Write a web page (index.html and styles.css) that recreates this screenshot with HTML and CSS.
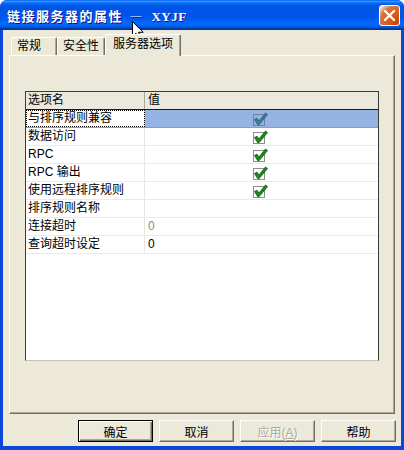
FILE: index.html
```html
<!DOCTYPE html>
<html lang="zh-CN">
<head>
    <meta charset="UTF-8">
    <title>链接服务器的属性 — XYJF</title>
    <link rel="stylesheet" href="styles.css">
</head>
<body>
    <div class="window">
        <div class="titlebar">
            <span class="title">链接服务器的属性 <span class="dash">—</span> <span class="code">XYJF</span></span>
            <div class="close">
                <svg width="19" height="19" viewBox="0 0 19 19"><path d="M5 5 L14 14 M14 5 L5 14" stroke="#fff" stroke-width="2.4" stroke-linecap="round"/></svg>
            </div>
        </div>

        <div class="client">
            <div class="tabs">
                <div class="tab t1">常规</div>
                <div class="tab t2">安全性</div>
                <div class="tab active">服务器选项</div>
            </div>

            <div class="panel">
                <div class="grid">
                    <div class="row head">
                        <div class="name">选项名</div>
                        <div class="val">值</div>
                    </div>
                    <div class="row selected">
                        <div class="name">与排序规则兼容</div>
                        <div class="val check">
                            <svg width="16" height="14" viewBox="0 0 16 14"><rect x="1.5" y="2.5" width="11" height="11" fill="none" stroke="#6a83a8"/><path d="M2.5 7.5 L5 6.2 L7 9 L13.5 1 L15.5 2.6 L7.2 12.6 L5.6 12.6 Z" fill="#3b7d93" stroke="#295a76" stroke-width="0.8" stroke-linejoin="round"/></svg>
                        </div>
                    </div>
                    <div class="row">
                        <div class="name">数据访问</div>
                        <div class="val check">
                            <svg width="16" height="14" viewBox="0 0 16 14"><rect x="1.5" y="2.5" width="11" height="11" fill="none" stroke="#8d8d8d"/><path d="M2.5 7.5 L5 6.2 L7 9 L13.5 1 L15.5 2.6 L7.2 12.6 L5.6 12.6 Z" fill="#1a8c1a" stroke="#0c560c" stroke-width="0.8" stroke-linejoin="round"/></svg>
                        </div>
                    </div>
                    <div class="row">
                        <div class="name">RPC</div>
                        <div class="val check">
                            <svg width="16" height="14" viewBox="0 0 16 14"><rect x="1.5" y="2.5" width="11" height="11" fill="none" stroke="#8d8d8d"/><path d="M2.5 7.5 L5 6.2 L7 9 L13.5 1 L15.5 2.6 L7.2 12.6 L5.6 12.6 Z" fill="#1a8c1a" stroke="#0c560c" stroke-width="0.8" stroke-linejoin="round"/></svg>
                        </div>
                    </div>
                    <div class="row">
                        <div class="name">RPC 输出</div>
                        <div class="val check">
                            <svg width="16" height="14" viewBox="0 0 16 14"><rect x="1.5" y="2.5" width="11" height="11" fill="none" stroke="#8d8d8d"/><path d="M2.5 7.5 L5 6.2 L7 9 L13.5 1 L15.5 2.6 L7.2 12.6 L5.6 12.6 Z" fill="#1a8c1a" stroke="#0c560c" stroke-width="0.8" stroke-linejoin="round"/></svg>
                        </div>
                    </div>
                    <div class="row">
                        <div class="name">使用远程排序规则</div>
                        <div class="val check">
                            <svg width="16" height="14" viewBox="0 0 16 14"><rect x="1.5" y="2.5" width="11" height="11" fill="none" stroke="#8d8d8d"/><path d="M2.5 7.5 L5 6.2 L7 9 L13.5 1 L15.5 2.6 L7.2 12.6 L5.6 12.6 Z" fill="#1a8c1a" stroke="#0c560c" stroke-width="0.8" stroke-linejoin="round"/></svg>
                        </div>
                    </div>
                    <div class="row">
                        <div class="name">排序规则名称</div>
                        <div class="val"></div>
                    </div>
                    <div class="row">
                        <div class="name">连接超时</div>
                        <div class="val muted">0</div>
                    </div>
                    <div class="row">
                        <div class="name">查询超时设定</div>
                        <div class="val">0</div>
                    </div>
                </div>
            </div>

            <div class="buttons">
                <button class="btn default">确定</button>
                <button class="btn">取消</button>
                <button class="btn disabled">应用(<u>A</u>)</button>
                <button class="btn">帮助</button>
            </div>
        </div>

        <!-- mouse pointer over the title -->
        <svg class="cursor" width="13" height="20" viewBox="0 0 13 20"><path d="M0.5 0.5 L0.5 15.5 L4 12.2 L6.8 18.5 L9.2 17.4 L6.5 11.3 L11.2 11.3 Z" fill="#fff" stroke="#000" stroke-linejoin="round"/></svg>
    </div>
</body>
</html>
```

FILE: styles.css
```css
body {
    margin: 0;
    background: #fff;
    font-family: "Liberation Sans", "Noto Sans CJK SC", sans-serif;
    font-size: 12px;
    color: #000;
}
.window {
    position: relative;
    width: 404px;
    height: 450px;
    display: flex;
    flex-direction: column;
    background: #0b47d9;
    border-radius: 7px 7px 0 0;
    overflow: hidden;
}
.titlebar {
    height: 30px;
    flex: none;
    display: flex;
    align-items: center;
    padding: 0 4px 0 7px;
    background: linear-gradient(#0058ee 0%, #3a93ff 4%, #288eff 6%, #127dff 8%, #036ffc 10%, #0262ee 14%, #0057e5 20%, #0054e3 24%, #0055eb 56%, #005bf5 66%, #026afe 76%, #0062ef 86%, #0052d6 92%, #0040ab 94%, #003092 100%);
}
.title {
    flex: 1;
    color: #fff;
    font-family: "Noto Sans CJK SC", sans-serif;
    font-size: 13px;
    font-weight: bold;
    letter-spacing: 1.5px;
    text-shadow: 1px 1px #0f1089;
    white-space: nowrap;
}
.title .dash {
    margin: 0 3px 0 2px;
}
.title .code {
    font-family: "Liberation Serif", serif;
    font-size: 13px;
    letter-spacing: 0.5px;
}
.close {
    width: 21px;
    height: 21px;
    box-sizing: border-box;
    border: 1px solid #fff;
    border-radius: 3px;
    background: radial-gradient(circle at 90% 90%, #cc4600 0%, #dc6527 55%, #cd7546 70%, #ffccb2 90%, #fff 100%);
    margin-top: 1px;
}
.close svg {
    display: block;
}
.client {
    flex: 1;
    margin: 0 3px 4px;
    padding: 4px 6px 0 6px;
    background: #ece9d8;
    display: flex;
    flex-direction: column;
    font-family: "Liberation Sans", "Noto Sans CJK SC", sans-serif;
}
.tabs {
    height: 21px;
    display: flex;
    align-items: flex-end;
    padding-left: 2px;
    position: relative;
    z-index: 1;
}
.tab {
    height: 18px;
    box-sizing: border-box;
    border: 1px solid;
    border-color: #fff #716f64 transparent #fff;
    border-bottom: none;
    border-radius: 2px 2px 0 0;
    box-shadow: inset -1px 0 #aca899;
    padding-left: 5px;
    line-height: 17px;
    background: #ece9d8;
}
.t1 {
    width: 46px;
}
.t2 {
    width: 48px;
}
.tab.active {
    width: 76px;
    height: 22px;
    margin-bottom: -1px;
    padding-left: 7px;
    line-height: 18px;
}
.panel {
    height: 359px;
    box-sizing: border-box;
    border: 1px solid;
    border-color: #fff #716f64 #716f64 #fff;
    box-shadow: inset -1px -1px #aca899;
    padding: 35px 0 0 15px;
}
.grid {
    width: 354px;
    height: 270px;
    box-sizing: border-box;
    border: 1px solid #3a3a3a;
    border-bottom-color: #c8c5b8;
    background: #fff;
}
.row {
    display: flex;
    height: 18px;
    box-sizing: border-box;
    border-bottom: 1px solid #ebebe6;
    line-height: 17px;
}
.name {
    width: 119px;
    box-sizing: border-box;
    border-right: 1px solid #e6e6e0;
    padding-left: 2px;
    white-space: nowrap;
    overflow: hidden;
}
.val {
    flex: 1;
    padding-left: 3px;
}
.row.head {
    background: #ebe9de;
    border-bottom: 1px solid #1a1a1a;
}
.row.head .name {
    border-right-color: #aca899;
}
.check {
    display: flex;
    align-items: center;
    justify-content: center;
    padding-left: 0;
}
.check svg {
    margin-right: 4px;
}
.row.selected .name {
    outline: 1px dotted #000;
    outline-offset: -1px;
}
.row.selected .val {
    background: #95b3e3;
}
.row.selected {
    border-bottom-color: #7d9fd8;
}
.muted {
    color: #8a8a8a;
}
.buttons {
    display: flex;
    justify-content: flex-end;
    gap: 6px;
    margin: 6px -1px 0 0;
}
.btn {
    width: 75px;
    height: 22px;
    box-sizing: border-box;
    padding: 0;
    background: #ece9d8;
    border: 1px solid;
    border-color: #fff #716f64 #716f64 #fff;
    box-shadow: inset -1px -1px #aca899;
    font-family: "Liberation Sans", "Noto Sans CJK SC", sans-serif;
    font-size: 12px;
    color: #000;
}
.btn.default {
    border: 1px solid #000;
    box-shadow: inset 1px 1px #fff, inset -1px -1px #716f64, inset -2px -2px #aca899;
}
.btn.disabled {
    color: #aca899;
    text-shadow: 1px 1px #fff;
}
.cursor {
    position: absolute;
    left: 132px;
    top: 21px;
}
```
